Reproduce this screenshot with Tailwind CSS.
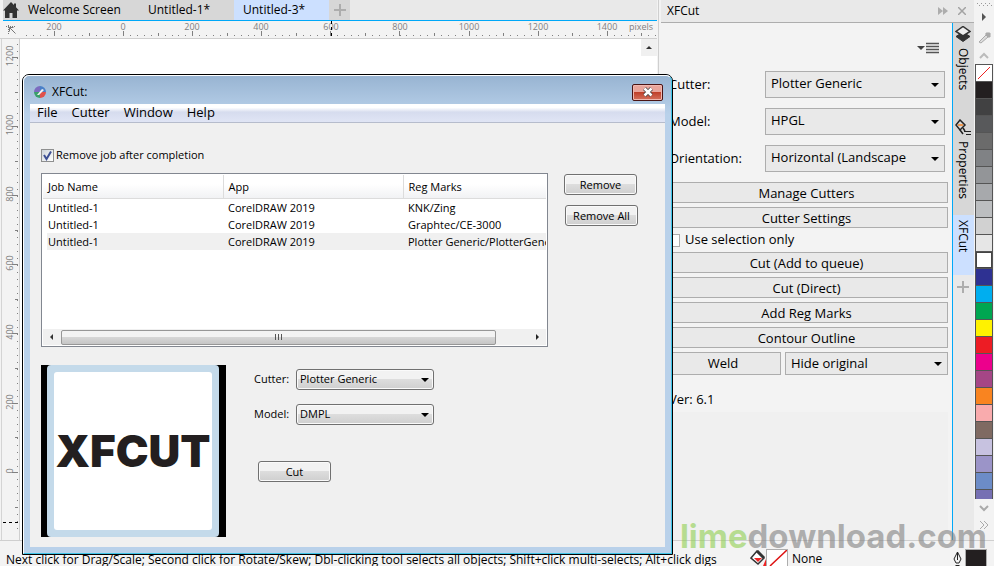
<!DOCTYPE html>
<html lang="en">
<head>
  <meta charset="utf-8">
  <meta name="viewport" content="width=device-width, initial-scale=1">
  <title>XFCut</title>
  <script src="https://cdn.jsdelivr.net/npm/@tailwindcss/browser@4"></script>
</head>
<body class="font-['Open_Sans','Noto_Sans',sans-serif] text-xs text-black bg-[#f3f3f3]">
<div class="relative h-screen flex flex-col overflow-hidden">
  <div class="flex flex-1 min-h-0">

    <!-- document area -->
    <main class="flex-1 min-w-0 flex flex-col">
      <nav class="flex h-[21px] border-b border-[#00a8f8] bg-[#e9e9e9] ml-[3px]">
        <a href="#" class="flex items-center gap-[9px] w-[136px] bg-[#d7d7d7]">
          <svg class="w-4 h-4" viewBox="0 0 16 16" fill="#333"><path d="M8 0 0 8.500h2V16h4.500v-5h3v5H14V8.500h2L13 5.200V1.500h-2v1.600z"/></svg>
          Welcome Screen
        </a>
        <a href="#" class="flex items-center pl-[9px] w-[95px] bg-[#d7d7d7]">Untitled-1*</a>
        <a href="#" class="flex items-center pl-[9px] w-[95px] bg-[#cce0ff]">Untitled-3*</a>
        <button type="button" aria-label="New document" class="w-[21px] bg-[#d7d7d7] flex items-center justify-center">
          <svg class="w-3 h-3" viewBox="0 0 12 12" stroke="#adadad" stroke-width="2"><path d="M6 0v12M0 6h12"/></svg>
        </button>
      </nav>

      <div class="flex h-[18px] border-b border-[#cfcfcf]">
        <svg class="w-5 h-full" viewBox="0 0 20 17" fill="none" stroke="#777"><path d="M8.500 4v10M6 5.500h10" stroke-dasharray="1 1"/><path d="M9.500 6.500l6 6M9.500 10.500v-4h4"/></svg>
        <svg class="flex-1 h-full text-[9px]" shape-rendering="crispEdges" fill="#808080" text-anchor="middle">
          <g stroke="#808080">
            <path d="M6.400 14.500H637" stroke-dasharray="1 5.910"/>
            <path d="M-.550 13.500H637" stroke-width="3" stroke-dasharray="1 68.100"/>
            <path d="M34 12.500H637" stroke-width="5" stroke-dasharray="1 68.100"/>
          </g>
          <text x="34" y="9">200</text><text x="103" y="9">0</text><text x="172" y="9">200</text>
          <text x="241" y="9">400</text><text x="311" y="9">600</text><text x="380" y="9">800</text>
          <text x="449" y="9">1000</text><text x="518" y="9">1200</text><text x="587" y="9">1400</text>
          <text x="621" y="9">pixels</text>
          <path d="M311.500 0v17" stroke="#000" stroke-dasharray="3 3"/>
        </svg>
      </div>

      <div class="flex flex-1 min-h-0">
        <svg class="w-5 h-full border-r border-[#cfcfcf] text-[9px]" shape-rendering="crispEdges" fill="#808080" text-anchor="middle">
          <path d="M1.500 0v520" stroke="#d4d4d4"/>
          <g stroke="#808080">
            <path d="M17.500 5V495" stroke-dasharray="1 5.910"/>
            <path d="M16.500 53V495" stroke-width="3" stroke-dasharray="1 68.100"/>
            <path d="M15 18V495" stroke-width="6" stroke-dasharray="1 68.100"/>
          </g>
          <text transform="translate(13 17) rotate(-90)">1200</text>
          <text transform="translate(13 86) rotate(-90)">1000</text>
          <text transform="translate(13 155) rotate(-90)">800</text>
          <text transform="translate(13 224) rotate(-90)">600</text>
          <text transform="translate(13 293) rotate(-90)">400</text>
          <text transform="translate(13 363) rotate(-90)">200</text>
          <text transform="translate(13 432) rotate(-90)">0</text>
          <path d="M3 483.500h16" stroke="#000" stroke-dasharray="3 3"/>
        </svg>
        <div class="flex-1 flex justify-end items-start bg-white">
          <button type="button" aria-label="Scroll up" class="w-4 h-[17px] bg-[#f0f0f0] flex items-center justify-center">
            <svg class="w-1.5 h-[3px]" viewBox="0 0 6 3"><path d="M3 0l3 3H0z" fill="#333"/></svg>
          </button>
        </div>
      </div>
    </main>

    <!-- docker -->
    <aside class="w-[316px] flex flex-col bg-[#f3f3f3] ml-px border-l border-[#cfcfcf]">
      <header class="flex items-center h-[23px] ml-0.5 pl-1.5 pr-1.5 bg-[#e9e9e9] border-b border-[#adadad]">
        <h2 class="flex-1">XFCut</h2>
        <button type="button" aria-label="Collapse" class="mr-2.5"><svg class="w-2.5 h-2" viewBox="0 0 10 8" fill="#adadad"><path d="M0 0l5 4-5 4zM5 0l5 4-5 4z"/></svg></button>
        <button type="button" aria-label="Close"><svg class="w-2 h-2 mr-0.5" viewBox="0 0 8 8" stroke="#a3a3a3" stroke-width="1.500"><path d="M0 0l8 8M8 0L0 8"/></svg></button>
      </header>
      <div class="flex flex-1 min-h-0">
        <form class="flex-1 flex flex-col pl-[6px] pr-1 text-[13px]">
          <div class="flex justify-end items-center h-12 pr-[9px] pt-0.5">
            <svg class="w-[22px] h-3" viewBox="0 0 22 12"><path d="M0 4h8l-4 4z" fill="#444"/><path d="M9 1.500h13M9 4.500h13M9 7.500h13M9 10.500h13" stroke="#555" stroke-width="1.500"/></svg>
          </div>
          <div class="grid grid-cols-[1fr_180px] gap-y-[10px] items-center pl-1 pr-[3px]">
            <label for="p-cutter">Cutter:</label>
            <div class="grid items-center h-[27px] border border-[#adadad] bg-[#e9e9e9]">
              <select id="p-cutter" class="col-start-1 row-start-1 appearance-none w-full pl-[5px] pb-0.5"><option>Plotter Generic</option></select>
              <svg class="col-start-1 row-start-1 justify-self-end mr-[5px] w-2 h-1 pointer-events-none" viewBox="0 0 8 4"><path d="M0 0h8L4 4z"/></svg>
            </div>
            <label for="p-model">Model:</label>
            <div class="grid items-center h-[27px] border border-[#adadad] bg-[#e9e9e9]">
              <select id="p-model" class="col-start-1 row-start-1 appearance-none w-full pl-[5px] pb-0.5"><option>HPGL</option></select>
              <svg class="col-start-1 row-start-1 justify-self-end mr-[5px] w-2 h-1 pointer-events-none" viewBox="0 0 8 4"><path d="M0 0h8L4 4z"/></svg>
            </div>
            <label for="p-orient">Orientation:</label>
            <div class="grid items-center h-[27px] border border-[#adadad] bg-[#e9e9e9]">
              <select id="p-orient" class="col-start-1 row-start-1 appearance-none w-full pl-[5px] pb-0.5"><option>Horizontal (Landscape</option></select>
              <svg class="col-start-1 row-start-1 justify-self-end mr-[5px] w-2 h-1 pointer-events-none" viewBox="0 0 8 4"><path d="M0 0h8L4 4z"/></svg>
            </div>
          </div>
          <div class="flex flex-col gap-1 mt-2.5">
            <button type="button" class="h-[21px] leading-4 border border-[#adadad] bg-[#e9e9e9]">Manage Cutters</button>
            <button type="button" class="h-[21px] leading-4 border border-[#adadad] bg-[#e9e9e9]">Cutter Settings</button>
            <label class="flex items-center gap-[5px] h-4"><input type="checkbox" class="appearance-none w-[13px] h-[13px] ml-0.5 border border-[#adadad] bg-white">Use selection only</label>
            <button type="button" class="h-[21px] leading-4 border border-[#adadad] bg-[#e9e9e9]">Cut (Add to queue)</button>
            <button type="button" class="h-[21px] leading-4 border border-[#adadad] bg-[#e9e9e9]">Cut (Direct)</button>
            <button type="button" class="h-[21px] leading-4 border border-[#adadad] bg-[#e9e9e9]">Add Reg Marks</button>
            <button type="button" class="h-[21px] leading-4 border border-[#adadad] bg-[#e9e9e9]">Contour Outline</button>
            <div class="grid grid-cols-[1fr_163px] gap-1">
              <button type="button" class="h-[23px] border border-[#adadad] bg-[#e9e9e9]">Weld</button>
              <div class="grid items-center h-[23px] border border-[#adadad] bg-[#e9e9e9]">
                <select aria-label="Original" class="col-start-1 row-start-1 appearance-none w-full pl-[5px]"><option>Hide original</option></select>
                <svg class="col-start-1 row-start-1 justify-self-end mr-[5px] w-2 h-1 pointer-events-none" viewBox="0 0 8 4"><path d="M0 0h8L4 4z"/></svg>
              </div>
            </div>
          </div>
          <p class="pl-1 mt-[14px] leading-5">Ver: 6.1</p>
          <div class="flex-1 mt-[3px] bg-[#f0f0f0]"></div>
        </form>

        <div class="w-[22px] flex flex-col border-l border-[#00a8f8] bg-[#e9e9e9]">
          <button type="button" class="flex flex-col items-center gap-1.5 h-24 pt-[3px] pr-0.5 bg-[#d7d7d7]">
            <svg class="w-4 h-4" viewBox="0 0 16 16" stroke="#333"><path d="M8 6l7 4.500-7 5-7-5z" fill="#333"/><path d="M8 .500l7 5-7 4.500-7-4.500z" fill="#eee" stroke-width="1.500"/></svg>
            <span class="[writing-mode:vertical-rl] leading-4">Objects</span>
          </button>
          <button type="button" class="flex flex-col items-center gap-1.5 h-24 pr-0.5 bg-[#d7d7d7]">
            <svg class="w-4 h-4" viewBox="0 0 16 16" fill="none" stroke="#222" stroke-width="1.500"><path d="M5 1l5 5-5 5-4-5z"/><path d="M5 11l3 4M8 9l2 3"/><path d="M3 6h5" stroke="#f58220"/><path d="M9 12.500h7M11 15.500h5" stroke-width="1"/></svg>
            <span class="[writing-mode:vertical-rl] leading-4">Properties</span>
          </button>
          <button type="button" class="flex flex-col items-center h-[60px] pt-[5px] pr-0.5 bg-[#cce0ff]">
            <span class="[writing-mode:vertical-rl] leading-4">XFCut</span>
          </button>
          <button type="button" aria-label="Add docker" class="flex justify-center pt-1.5 pr-px">
            <svg class="w-3 h-3" viewBox="0 0 12 12" stroke="#adadad" stroke-width="2"><path d="M6 0v12M0 6h12"/></svg>
          </button>
        </div>
      </div>
    </aside>

    <!-- colour palette -->
    <div class="w-5 flex flex-col items-center bg-[#f3f3f3]">
      <svg class="w-5 h-16" viewBox="0 0 20 64" fill="none">
        <path d="M3 3.500h15M5 5.500h13" stroke="#999" stroke-dasharray="1 3"/>
        <path d="M8 13l4 4-4 4z" fill="#555"/>
        <path d="M5 42l7-7 2 2-7 6z" fill="#ddd" stroke="#aaa"/><path d="M12 33l4 4M14 35l2-2" stroke="#aaa" stroke-width="3"/>
        <path d="M6 58l4-4 4 4" stroke="#bbb" stroke-width="2"/>
      </svg>
      <ul class="w-[18px] border-x border-t border-[#555] bg-[#555] flex flex-col gap-px">
        <li class="h-4 bg-white"><svg class="w-4 h-4" viewBox="0 0 16 16"><path d="M2 14L14 2" stroke="#e22"/></svg></li>
        <li class="h-4 bg-[#231f20]"></li>
        <li class="h-4 bg-[#414142]"></li>
        <li class="h-4 bg-[#58595b]"></li>
        <li class="h-4 bg-[#6b6b6b]"></li>
        <li class="h-4 bg-[#808285]"></li>
        <li class="h-4 bg-[#939598]"></li>
        <li class="h-4 bg-[#a7a9ac]"></li>
        <li class="h-4 bg-[#bcbec0]"></li>
        <li class="h-4 bg-[#d1d1d1]"></li>
        <li class="h-4 bg-[#e6e6e6]"></li>
        <li class="h-4 bg-white border border-[#444]"></li>
        <li class="h-4 bg-[#2e3192]"></li>
        <li class="h-4 bg-[#00aeef]"></li>
        <li class="h-4 bg-[#00a651]"></li>
        <li class="h-4 bg-[#fff200]"></li>
        <li class="h-4 bg-[#ed1c24]"></li>
        <li class="h-4 bg-[#ec008c]"></li>
        <li class="h-4 bg-[#a54686]"></li>
        <li class="h-4 bg-[#f98420]"></li>
        <li class="h-4 bg-[#f9abad]"></li>
        <li class="h-4 bg-[#7f6a62]"></li>
        <li class="h-4 bg-[#c7c2e0]"></li>
        <li class="h-4 bg-[#9b94c8]"></li>
        <li class="h-4 bg-[#6c8cc7]"></li>
        <li class="h-[9px] bg-[#7670b3]"></li>
      </ul>
      <svg class="w-5 h-9" viewBox="0 0 20 36" fill="none" stroke="#aaa"><path d="M6 7l4 4 4-4" stroke-width="2"/><path d="M6 22l4 4-4 4M10 22l4 4-4 4"/></svg>
    </div>
  </div>

  <!-- status bar -->
  <footer class="h-[26px] flex items-end border-t border-[#cfcfcf] pl-1.5 pr-[7px] overflow-hidden">
    <p class="flex-1 whitespace-nowrap leading-3">Next click for Drag/Scale; Second click for Rotate/Skew; Dbl-clicking tool selects all objects; Shift+click multi-selects; Alt+click digs</p>
    <svg class="w-4 h-4" viewBox="0 0 16 16"><path d="M7 1l7 7-6 6-7-6z" fill="#fff" stroke="#333" stroke-width="1.500"/><path d="M7 1l7 7" stroke="#333" stroke-width="3"/><path d="M4 8h8l-4 4z" fill="#e22"/><path d="M16 9v7h-3z" fill="#e22"/></svg>
    <svg class="w-[22px] h-[17px] mr-1 border-x border-t border-[#adadad] bg-white" viewBox="0 0 20 16"><path d="M3 16L20 0" stroke="#d11" stroke-width="1.500"/></svg>
    <span class="w-[161px] leading-[14px]">None</span>
    <svg class="w-[9px] h-[15px] mr-[3px]" viewBox="0 0 9 15" fill="none" stroke="#222"><path d="M4.500 1L1 8l2 4h3l2-4zM4.500 1v8M2.500 14.500h4"/></svg>
    <span class="w-[22px] h-[17px] bg-[#231f20] border-x border-t border-[#adadad]"></span>
  </footer>

  <div class="absolute right-[7px] bottom-3 font-['Inter',sans-serif] font-bold text-[33px] leading-9 text-[#808080]/60 pointer-events-none"><span class="text-[#8fcf4f]/60">lime</span>download.com</div>

  <!-- job queue window -->
  <section class="absolute left-[22px] top-[74px] w-[651px] h-[481px] flex flex-col rounded-t-[7px] border border-black bg-[#b9d1ea]">
    <div class="flex-1 flex flex-col min-h-0 rounded-t-[6px] border border-t-white border-l-white border-r-[#3ec5e8] border-b-[#3ec5e8] px-[6px] pb-[6px] bg-linear-to-b from-[#98b4d2] via-[#b9d1ea] via-8% to-[#b9d1ea]">
      <header class="flex items-center h-7 pl-1 pr-0.5 pt-1">
        <svg class="w-3 h-3 mr-1.5" viewBox="0 0 12 12"><path d="M6 0a6 6 0 0 0-6 6h6z" fill="#7b6bc0"/><path d="M6 0a6 6 0 0 1 6 6H6z" fill="#4a80c8"/><path d="M12 6a6 6 0 0 1-6 6V6z" fill="#e0524c"/><path d="M0 6a6 6 0 0 0 6 6V6z" fill="#3aa06a"/><path d="M3 9l5-6 2 1-5 5z" fill="#f3f3f3"/></svg>
        <h1 class="flex-1">XFCut:</h1>
        <button type="button" aria-label="Close window" class="w-[31px] h-[17px] flex items-center justify-center rounded-xs border border-[#4a1414] bg-linear-to-b from-[#e9a59b] from-45% via-[#c0402a] via-50% to-[#d4705c] shadow-[inset_0_0_0_1px_#f0b8b0]">
          <svg class="w-3 h-2.5" viewBox="0 0 12 10"><path d="M2.500 1.500l7 7M9.500 1.500l-7 7" stroke="#444" stroke-width="4"/><path d="M2.500 1.500l7 7M9.500 1.500l-7 7" stroke="#fff" stroke-width="2.500"/></svg>
        </button>
      </header>
      <div class="flex-1 min-h-0 bg-[#f0f0f0] text-[11px]">
        <nav class="flex items-center gap-[14px] h-[19px] pl-[7px] text-[13px] border-b border-[#b6bccc] bg-linear-to-b from-white from-20% via-[#d6dcee] via-45% to-[#e0e5f5]">
          <a href="#">File</a><a href="#">Cutter</a><a href="#">Window</a><a href="#">Help</a>
        </nav>

        <div class="px-[11px] pt-6">
          <label class="flex items-center gap-0.5 h-4">
            <span class="grid">
              <input type="checkbox" checked class="col-start-1 row-start-1 appearance-none w-[13px] h-[13px] border border-[#8e8f8f] bg-linear-to-br from-[#cfd5da] to-white">
              <svg class="col-start-1 row-start-1 w-[13px] h-[13px] pointer-events-none" viewBox="0 0 13 13" fill="none" stroke="#3d4f94" stroke-width="2"><path d="M3 6l2.500 4L10 2.500"/></svg>
            </span>
            Remove job after completion
          </label>

          <div class="flex items-start gap-4 mt-2.5">
            <div class="w-[507px] h-[174px] flex flex-col border border-[#828790] bg-white p-px">
              <div class="flex-1 overflow-hidden">
                <table class="w-[504px] table-fixed text-left leading-[17px] whitespace-nowrap">
                  <thead>
                    <tr class="bg-linear-to-b from-white from-40% to-[#f1f2f4]">
                      <th class="w-[180px] h-[23px] pl-[5px] font-normal border-r border-b border-[#dcdcdc]">Job Name</th>
                      <th class="w-[180px] pl-[5px] font-normal border-r border-b border-[#dcdcdc]">App</th>
                      <th class="pl-[5px] font-normal border-b border-[#dcdcdc]">Reg Marks</th>
                    </tr>
                  </thead>
                  <tbody>
                    <tr><td class="pl-[5px]">Untitled-1</td><td class="pl-[5px]">CorelDRAW 2019</td><td class="pl-[5px]">KNK/Zing</td></tr>
                    <tr><td class="pl-[5px]">Untitled-1</td><td class="pl-[5px]">CorelDRAW 2019</td><td class="pl-[5px]">Graphtec/CE-3000</td></tr>
                    <tr><td class="pl-[5px] bg-linear-to-r from-white from-[4px] to-[#f0f0f0] to-[4px]">Untitled-1</td><td class="pl-[5px] bg-[#f0f0f0]">CorelDRAW 2019</td><td class="pl-[5px] bg-[#f0f0f0]">Plotter Generic/PlotterGeneric</td></tr>
                  </tbody>
                </table>
              </div>
              <div class="h-4 flex items-center bg-[#f0f0f0]">
                <svg class="w-[18px] h-2" viewBox="0 0 18 8"><path d="M10 1v6L7 4z" fill="#333"/></svg>
                <div class="w-[435px] h-[15px] flex items-center justify-center gap-0.5 rounded-xs border border-[#979797] bg-linear-to-b from-[#f3f3f3] from-45% via-[#d6d6d6] via-50% to-[#c6c6c6]">
                  <i class="w-px h-1.5 bg-[#555]"></i><i class="w-px h-1.5 bg-[#555]"></i><i class="w-px h-1.5 bg-[#555]"></i>
                </div>
                <svg class="w-2 h-2 ml-auto mr-0.5" viewBox="0 0 8 8"><path d="M0 1v6l3-3z" fill="#222"/></svg>
              </div>
            </div>
            <div class="flex flex-col gap-2.5">
              <button type="button" class="w-[73px] h-[21px] leading-3 mt-px rounded-[3px] border border-[#707070] bg-linear-to-b from-[#f2f2f2] from-45% via-[#dddddd] via-50% to-[#cfcfcf] shadow-[inset_0_0_0_1px_#fafafa]">Remove</button>
              <button type="button" class="w-[73px] h-[21px] leading-3 ml-px rounded-[3px] border border-[#707070] bg-linear-to-b from-[#f2f2f2] from-45% via-[#dddddd] via-50% to-[#cfcfcf] shadow-[inset_0_0_0_1px_#fafafa]">Remove All</button>
            </div>
          </div>

          <div class="flex items-start gap-7 mt-[18px]">
            <div class="w-[185px] pl-[6px] pr-[7px] bg-black">
              <div class="h-[172px] rounded-[4px] border-[7px] border-[#c4daea] bg-[#c4daea]">
                <div class="h-full rounded-[3px] bg-white flex items-center justify-center overflow-hidden font-['Inter',sans-serif] font-black text-[44px] text-[#231f20]">XFCUT</div>
              </div>
            </div>
            <form class="pt-1">
              <div class="grid grid-cols-[42px_138px] gap-y-[14px] items-center">
                <label for="cutter">Cutter:</label>
                <div class="grid items-center h-[21px] rounded-[3px] border border-[#707070] bg-linear-to-b from-[#f2f2f2] from-45% via-[#dddddd] via-50% to-[#cfcfcf] shadow-[inset_0_0_0_1px_#fafafa]">
                  <select id="cutter" class="col-start-1 row-start-1 appearance-none w-full pl-[3px]"><option>Plotter Generic</option></select>
                  <svg class="col-start-1 row-start-1 justify-self-end mr-1 w-2 h-1 pointer-events-none" viewBox="0 0 8 4"><path d="M0 0h8L4 4z"/></svg>
                </div>
                <label for="model">Model:</label>
                <div class="grid items-center h-[21px] rounded-[3px] border border-[#707070] bg-linear-to-b from-[#f2f2f2] from-45% via-[#dddddd] via-50% to-[#cfcfcf] shadow-[inset_0_0_0_1px_#fafafa]">
                  <select id="model" class="col-start-1 row-start-1 appearance-none w-full pl-[3px]"><option>DMPL</option></select>
                  <svg class="col-start-1 row-start-1 justify-self-end mr-1 w-2 h-1 pointer-events-none" viewBox="0 0 8 4"><path d="M0 0h8L4 4z"/></svg>
                </div>
              </div>
              <button type="button" class="w-[73px] h-[21px] leading-3 mt-9 ml-1 rounded-[3px] border border-[#707070] bg-linear-to-b from-[#f2f2f2] from-45% via-[#dddddd] via-50% to-[#cfcfcf] shadow-[inset_0_0_0_1px_#fafafa]">Cut</button>
            </form>
          </div>
        </div>
      </div>
    </div>
  </section>
</div>
</body>
</html>
